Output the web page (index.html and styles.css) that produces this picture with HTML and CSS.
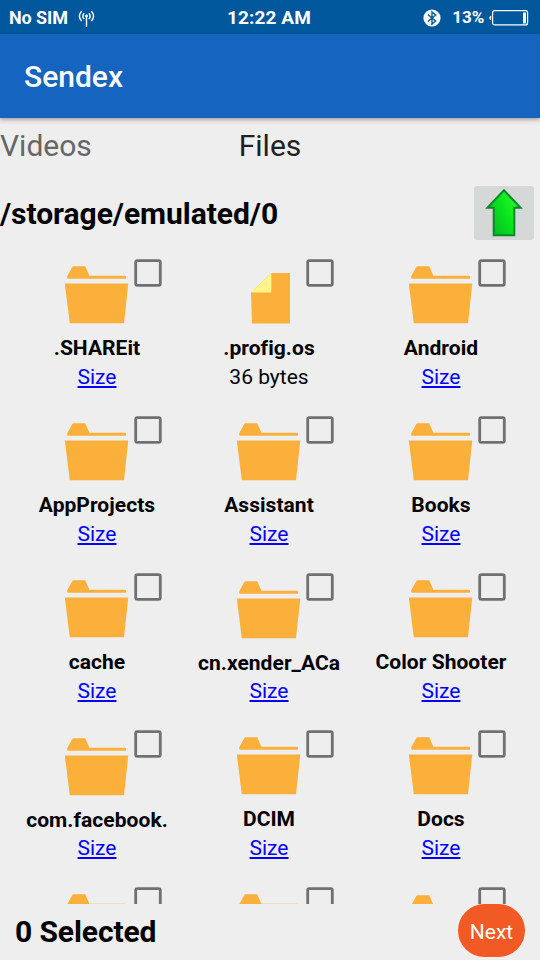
FILE: index.html
```html
<!DOCTYPE html>
<html lang="en">
<head>
<meta charset="utf-8">
<title>Sendex</title>
<link rel="stylesheet" href="styles.css">
</head>
<body>
<svg class="sprite" aria-hidden="true">
  <symbol id="folder" viewBox="0 0 66 60">
    <path fill="#fbb03b" d="M3.2 10.3 8.8 0.2H21.2L25.4 9.8H61.2a.8.8 0 0 1 .8.8v1.4a.8.8 0 0 1-.8.8H4a.8.8 0 0 1-.8-.8ZM.8 17.4H64.3L60 57.3H5.8Z"/>
  </symbol>
  <symbol id="file" viewBox="0 0 66 60">
    <path fill="#fbb03b" d="M35.3 7H54V57.4H16L15 26.6 35.3 7Z"/>
    <path fill="#fff58a" d="M35.3 7V26.6H15Z"/>
  </symbol>
  <symbol id="checkbox" viewBox="0 0 28 28">
    <rect x="1.7" y="1.7" width="24.6" height="24.6" rx="1.6" fill="none" stroke="#707070" stroke-width="2.8"/>
  </symbol>
</svg>
<div class="screen">
  <header class="status">
    <div class="status-left">
      <span>No SIM</span>
      <svg class="antenna" width="18" height="18" viewBox="0 0 18 18" fill="none" stroke="#fff" stroke-width="1.4">
        <path d="M3.6 1.2Q-.8 6 3.6 11M6.2 3.2Q3.4 6.2 6.2 9M10.8 3.2Q13.6 6.2 10.8 9M13.4 1.2Q17.8 6 13.4 11M8.5 6V17"/>
        <circle cx="8.5" cy="6" r="1.4" fill="#fff" stroke="none"/>
      </svg>
    </div>
    <span class="clock">12:22 AM</span>
    <div class="status-right">
      <svg width="18" height="18" viewBox="0 0 18 18">
        <circle cx="9" cy="9" r="8.6" fill="#fff"/>
        <path d="M4.9 5.5 12.6 12 9 15V3L12.6 6 4.9 12.5" fill="none" stroke="#00579c" stroke-width="1.4"/>
      </svg>
      <span class="percent">13%</span>
      <svg width="40" height="16" viewBox="0 0 40 16">
        <path d="M2.2 5.5V10.5Q.4 10 .4 8T2.2 5.5Z" fill="#fff"/>
        <rect x="3.6" y=".7" width="35" height="14.2" rx="2" fill="none" stroke="#fff" stroke-width="1.2"/>
        <rect x="34" y="2.5" width="3" height="11" fill="#fff"/>
      </svg>
    </div>
  </header>
  <div class="appbar">Sendex</div>
  <nav class="tabs"><span class="tab">Videos</span><span class="tab active">Files</span><span></span></nav>
  <div class="location">
    <span class="path">/storage/emulated/0</span>
    <button class="up" aria-label="Up">
      <svg width="38" height="50" viewBox="0 0 38 50">
        <defs><linearGradient id="green" x1="1" y1="0" x2="0" y2=".7"><stop offset="0" stop-color="#39ff2a"/><stop offset=".55" stop-color="#08e51c"/><stop offset="1" stop-color="#08bd22"/></linearGradient></defs>
        <path d="M19 2.3 35.6 19.7H29.3V47.2H8.7V19.7H2.4Z" fill="url(#green)" stroke="#08882d" stroke-width="2"/>
      </svg>
    </button>
  </div>
  <main class="grid">
    <div class="item"><div class="top"><svg class="icon"><use href="#folder"/></svg><svg class="box"><use href="#checkbox"/></svg></div><b class="name">.SHAREit</b><a class="size">Size</a></div>
    <div class="item"><div class="top"><svg class="icon"><use href="#file"/></svg><svg class="box"><use href="#checkbox"/></svg></div><b class="name">.profig.os</b><span class="size plain">36 bytes</span></div>
    <div class="item"><div class="top"><svg class="icon"><use href="#folder"/></svg><svg class="box"><use href="#checkbox"/></svg></div><b class="name">Android</b><a class="size">Size</a></div>
    <div class="item"><div class="top"><svg class="icon"><use href="#folder"/></svg><svg class="box"><use href="#checkbox"/></svg></div><b class="name">AppProjects</b><a class="size">Size</a></div>
    <div class="item"><div class="top"><svg class="icon"><use href="#folder"/></svg><svg class="box"><use href="#checkbox"/></svg></div><b class="name">Assistant</b><a class="size">Size</a></div>
    <div class="item"><div class="top"><svg class="icon"><use href="#folder"/></svg><svg class="box"><use href="#checkbox"/></svg></div><b class="name">Books</b><a class="size">Size</a></div>
    <div class="item"><div class="top"><svg class="icon"><use href="#folder"/></svg><svg class="box"><use href="#checkbox"/></svg></div><b class="name">cache</b><a class="size">Size</a></div>
    <div class="item low"><div class="top"><svg class="icon"><use href="#folder"/></svg><svg class="box"><use href="#checkbox"/></svg></div><b class="name">cn.xender_ACa</b><a class="size">Size</a></div>
    <div class="item"><div class="top"><svg class="icon"><use href="#folder"/></svg><svg class="box"><use href="#checkbox"/></svg></div><b class="name">Color Shooter</b><a class="size">Size</a></div>
    <div class="item low"><div class="top"><svg class="icon"><use href="#folder"/></svg><svg class="box"><use href="#checkbox"/></svg></div><b class="name">com.facebook.</b><a class="size">Size</a></div>
    <div class="item"><div class="top"><svg class="icon"><use href="#folder"/></svg><svg class="box"><use href="#checkbox"/></svg></div><b class="name">DCIM</b><a class="size">Size</a></div>
    <div class="item"><div class="top"><svg class="icon"><use href="#folder"/></svg><svg class="box"><use href="#checkbox"/></svg></div><b class="name">Docs</b><a class="size">Size</a></div>
    <div class="item"><div class="top"><svg class="icon"><use href="#folder"/></svg><svg class="box"><use href="#checkbox"/></svg></div></div>
    <div class="item"><div class="top"><svg class="icon"><use href="#folder"/></svg><svg class="box"><use href="#checkbox"/></svg></div></div>
    <div class="item low"><div class="top"><svg class="icon"><use href="#folder"/></svg><svg class="box"><use href="#checkbox"/></svg></div></div>
  </main>
  <footer class="bottom">
    <span class="selected">0 Selected</span>
    <button class="next">Next</button>
  </footer>
</div>
</body>
</html>
```
FILE: styles.css
```css
* { box-sizing: border-box; }
body { margin: 0; font-family: Roboto, "Liberation Sans", sans-serif; background: #eee; color: #000; }
button { border: 0; padding: 0; font: inherit; }
svg { display: block; flex: none; }
.sprite { display: none; }
.screen { width: 540px; height: 960px; display: flex; flex-direction: column; overflow: hidden; }

.status { position: relative; z-index: 1; height: 34px; flex: none; display: grid; grid-template-columns: 1fr auto 1fr; align-items: center; padding: 0 11px 0 9px; background: #00579c; color: #fff; font-size: 18px; font-weight: 700; line-height: 35px; }
.status-left, .status-right { display: flex; align-items: center; }
.status-left { gap: 10px; letter-spacing: -.1px; }
.antenna { margin-top: 2px; }
.clock { font-size: 19px; letter-spacing: .1px; }
.status-right { justify-content: flex-end; padding-right: .5px; }
.percent { margin: 0 4px 0 11px; font-size: 17px; letter-spacing: .1px; }

.appbar { height: 84px; flex: none; padding-left: 24px; background: #1565c0; color: #fff; font-size: 30px; font-weight: 500; line-height: 86px; box-shadow: 0 1px 5px rgba(60, 30, 30, .5); }

.tabs { height: 60px; flex: none; display: grid; grid-template-columns: 1fr auto 1fr; font-size: 30px; line-height: 56px; }
.tab { color: #666; }
.tab.active { color: #212121; }

.location { height: 70px; flex: none; display: flex; justify-content: space-between; align-items: flex-start; padding: 8px 6px 0 0; }
.path { font-size: 30px; font-weight: 700; line-height: 56px; letter-spacing: -.04px; }
.up { width: 60px; height: 54px; display: flex; align-items: center; justify-content: center; border-radius: 3px; background: #d6d7d7; }

.grid { flex: 1; min-height: 0; overflow: hidden; display: grid; grid-template-columns: repeat(3, 172px); grid-auto-rows: 157px; padding: 11px 11px 0; }
.item { display: flex; flex-direction: column; align-items: center; min-width: 0; }
.top { width: 100%; height: 77px; flex: none; display: grid; grid-template-columns: 1fr 66px 1fr; align-items: start; }
.icon { grid-column: 2; width: 66px; height: 60px; margin-top: 7px; }
.low .icon { margin-top: 8px; }
.box { width: 28px; height: 28px; margin-left: 4px; }
.name { font-size: 21px; line-height: 25px; white-space: nowrap; letter-spacing: .05px; }
.low .name { padding-top: 1px; margin-bottom: -1px; }
.size { margin-top: 4px; font-size: 21px; line-height: 25px; color: #00f; text-decoration: underline; }
.plain { color: #000; text-decoration: none; }

.bottom { height: 56px; flex: none; display: flex; justify-content: space-between; padding: 0 15px; }
.selected { font-size: 30px; font-weight: 700; line-height: 56px; letter-spacing: -.1px; }
.next { width: 67px; height: 53px; border-radius: 27px; background: #f15a24; color: #fff; font-size: 21px; line-height: 56px; }
```
